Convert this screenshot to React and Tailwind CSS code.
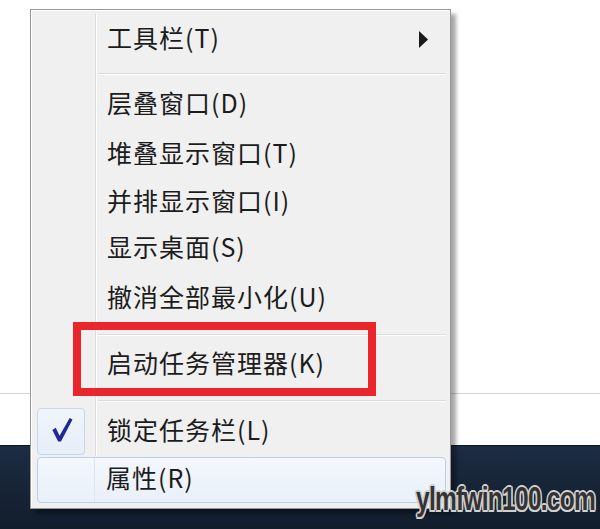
import React from "react";

const FONT = { fontFamily: '"Noto Sans CJK SC", "Noto Sans", sans-serif' };

function Gutter({ children, className = "" }) {
  return (
    <div
      className={
        "w-[64px] shrink-0 self-stretch border-r border-[#dedede] [box-shadow:1px_0_0_#ffffff] " +
        className
      }
    >
      {children}
    </div>
  );
}

function Item({ label, h = "h-[48px]", right, pb = "pb-[6px]" }) {
  return (
    <div className={"flex " + h}>
      <Gutter />
      <div className={"flex flex-1 items-center pl-[11px] pr-[22px] " + pb}>
        <span className="text-[25px] leading-none tracking-[1px] text-[#1c1c1c]">{label}</span>
        <div className="flex-1" />
        {right}
      </div>
    </div>
  );
}

function Sep({ pt, pb }) {
  return (
    <div className="flex">
      <Gutter />
      <div className={"flex-1 pl-[2px] pr-[4px] " + pt + " " + pb}>
        <div className="h-px bg-[#dcdcdc]" />
        <div className="h-px bg-white" />
      </div>
    </div>
  );
}

export default function App() {
  return (
    <div className="relative h-[529px] w-[600px] overflow-hidden bg-white" style={FONT}>
      {/* background page */}
      <div className="flex h-full flex-col">
        <div className="h-[393px]" />
        <div className="h-px bg-[#d4d4d4]" />
        <div className="h-[51px] bg-white" />
        <div className="flex-1 bg-gradient-to-b from-[#1c2c42] to-[#121d2c] border-t border-[#0c1420]" />
      </div>

      {/* context menu */}
      <div className="absolute left-[30px] top-[9px] w-[421px] h-[500px] border border-[#979797] bg-[#f0f0f0] shadow-[5px_5px_4px_rgba(0,0,0,0.35)]">
        <div className="flex h-full flex-col border-l border-t border-white pt-[3px]">
          <Item
            label="工具栏(T)"
            h="h-[56px]"
            pb="pb-[9px]"
            right={
              <svg width="10" height="17" viewBox="0 0 10 17" className="mt-[3px]">
                <polygon points="1,0 10,8.5 1,17" fill="#1a1a1a" />
              </svg>
            }
          />
          <Sep pt="pt-[3px]" pb="pb-[8px]" />
          <Item label="层叠窗口(D)" pb="pb-[10px]" />
          <Item label="堆叠显示窗口(T)" />
          <Item label="并排显示窗口(I)" />
          <Item label="显示桌面(S)" pb="pb-[9px]" />
          <Item label="撤消全部最小化(U)" />
          <Sep pt="pt-[11px]" pb="pb-[6px]" />
          <Item label="启动任务管理器(K)" pb="pb-[7px]" />
          <Sep pt="pt-[10px]" pb="pb-[5px]" />
          {/* checked item */}
          <div className="flex h-[49px]">
            <Gutter className="pl-[5px] pt-[1px]">
              <div className="flex h-[47px] w-[48px] items-center justify-center rounded-[4px] border border-[#c6d7ea] bg-gradient-to-b from-[#f1f5fb] to-[#e6eef8]">
                <svg width="48" height="47" viewBox="0 0 48 47">
                  <path d="M15 22 L18.5 19.5 L22.5 28 L33 9.5 L36 11 L24 34 L21 34 Z" fill="#1d2a8e" />
                </svg>
              </div>
            </Gutter>
            <div className="flex flex-1 items-center pl-[11px] pb-[4px]">
              <span className="text-[25px] leading-none tracking-[1px] text-[#1c1c1c]">锁定任务栏(L)</span>
            </div>
          </div>
          {/* hovered item */}
          <div className="ml-[5px] mr-[4px] mt-[1px] flex h-[46px] rounded-[4px] border border-[#b9d0ec] bg-gradient-to-b from-[#f4f8fd] to-[#e9f0f9]">
            <div className="w-[57px] shrink-0 border-r border-[#dde6f0]" />
            <div className="flex flex-1 items-center pl-[11px] pb-[5px]">
              <span className="text-[25px] leading-none tracking-[1px] text-[#1c1c1c]">属性(R)</span>
            </div>
          </div>
        </div>
      </div>

      {/* red highlight box */}
      <div className="absolute left-[73px] top-[322px] h-[74px] w-[303px] border-[8px] border-[#e8262b]" />

      {/* watermark */}
      <div className="absolute left-[416px] top-[481px] w-[180px]">
        <span
          className="inline-block origin-left scale-x-[0.72] text-[34px] font-bold leading-none tracking-[-1px] text-[#333333] [text-shadow:-2px_0_0_#d0d0d0,2px_0_0_#d0d0d0,0_-2px_0_#d0d0d0,0_2px_0_#d0d0d0,-1.5px_-1.5px_0_#d0d0d0,1.5px_1.5px_0_#d0d0d0,-1.5px_1.5px_0_#d0d0d0,1.5px_-1.5px_0_#d0d0d0]"
          style={{ fontFamily: '"Liberation Sans", Arial, sans-serif' }}
        >
          ylmfwin100.com
        </span>
      </div>
    </div>
  );
}
